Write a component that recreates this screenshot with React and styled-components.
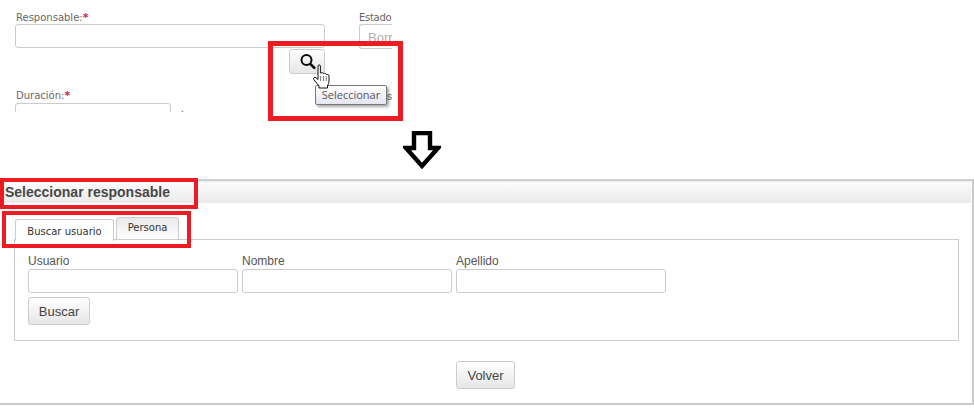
import React from "react";
import styled, { createGlobalStyle } from "styled-components";

const GlobalStyle = createGlobalStyle`
  html, body {
    margin: 0;
    padding: 0;
    background: #fff;
  }
  body {
    font-family: "Liberation Sans", Arial, sans-serif;
  }
`;

const Page = styled.div`
  position: relative;
  width: 974px;
  height: 410px;
  overflow: hidden;
  background: #fff;
`;

/* ---- top form snippet ---- */
const TopForm = styled.div`
  height: 112px;
  width: 392px;
  overflow: hidden;
  padding: 11px 0 0 15px;
  box-sizing: border-box;
  display: grid;
  grid-template-columns: 310px 33px;
  grid-template-rows: 78px auto;
  column-gap: 34px;
`;

const Field = styled.div`
  display: flex;
  flex-direction: column;
`;

const TopLabel = styled.label`
  font-family: "DejaVu Sans", Verdana, sans-serif;
  font-size: 10px;
  line-height: 13px;
  color: #666;
  padding-left: ${(p) => p.$indent || 0}px;
  letter-spacing: ${(p) => p.$tight || 0}px;
  white-space: nowrap;
  b {
    color: #d6135c;
    font-size: 11px;
    font-weight: 700;
    line-height: 10px;
  }
`;

const TopInput = styled.div`
  box-sizing: border-box;
  width: ${(p) => p.$w}px;
  height: ${(p) => p.$h}px;
  border: 1px solid #ccc;
  border-radius: 3px;
  background: #fff;
  flex: none;
`;

const ClippedInput = styled(TopInput)`
  border-right: none;
  border-radius: 3px 0 0 3px;
  padding: 5px 0 0 8px;
  overflow: hidden;
  font-size: 13px;
  line-height: 16px;
  color: #b0b0b0;
  white-space: nowrap;
`;

const SearchButton = styled.button`
  display: flex;
  align-items: center;
  justify-content: center;
  align-self: flex-end;
  box-sizing: border-box;
  width: 36px;
  height: 25px;
  margin-top: 1px;
  padding: 0;
  border: 1px solid #ccc;
  border-radius: 3px;
  background: linear-gradient(#fff, #e6e6e6);
`;

const DurationRow = styled.div`
  display: flex;
  align-items: flex-start;
  gap: 10px;
  margin-top: 1px;
`;

const Dot = styled.span`
  font-size: 10px;
  line-height: 8px;
  color: #555;
  margin-top: 2px;
`;

/* ---- overlays in the top snippet ---- */
const Tooltip = styled.div`
  position: absolute;
  left: 315px;
  top: 85px;
  width: 72px;
  height: 20px;
  box-sizing: border-box;
  border: 1px solid #767676;
  border-radius: 2px;
  background: linear-gradient(#fff, #e4e5f0);
  box-shadow: 2px 2px 3px rgba(0, 0, 0, 0.35);
  font-family: "Open Sans", sans-serif;
  font-size: 11px;
  line-height: 18px;
  text-align: center;
  color: #575757;
`;

const BehindText = styled.span`
  position: absolute;
  left: 387px;
  top: 91px;
  font-size: 10px;
  line-height: 12px;
  color: #666;
`;

const Cursor = styled.svg`
  position: absolute;
  left: 312px;
  top: 64px;
`;

const RedFrame = styled.div`
  position: absolute;
  left: ${(p) => p.$x}px;
  top: ${(p) => p.$y}px;
  width: ${(p) => p.$w}px;
  height: ${(p) => p.$h}px;
  box-sizing: border-box;
  border: ${(p) => p.$b || 4}px solid #ed1c24;
  pointer-events: none;
`;

const ArrowRow = styled.div`
  height: 67px;
  padding: 19px 0 0 403px;
  box-sizing: border-box;
`;

/* ---- dialog ---- */
const Dialog = styled.div`
  box-sizing: border-box;
  width: 974px;
  height: 226px;
  border-top: 2px solid #cfcfcf;
  border-right: 2px solid #c9c9c9;
  border-bottom: 2px solid #c9c9c9;
  display: flex;
  flex-direction: column;
`;

const DialogHeader = styled.div`
  height: 22px;
  margin-right: 1px;
  padding-left: 5px;
  border-top: 1px solid #ececec;
  box-sizing: border-box;
  background: linear-gradient(#fbfbfb, #ebeaea);
  font-size: 14px;
  font-weight: 700;
  line-height: 21px;
  color: #474747;
  flex: none;
`;

const TabBar = styled.div`
  display: flex;
  align-items: flex-end;
  gap: 2px;
  height: 37px;
  margin-bottom: -1px;
  padding-left: 15px;
  box-sizing: border-box;
  position: relative;
  flex: none;
`;

const Tab = styled.div`
  box-sizing: border-box;
  width: ${(p) => p.$w}px;
  height: ${(p) => (p.$active ? 22 : 23)}px;
  border: 1px solid #ccc;
  border-bottom: ${(p) => (p.$active ? "none" : "1px solid #ccc")};
  border-radius: 3px 3px 0 0;
  background: ${(p) => (p.$active ? "#fff" : "linear-gradient(#e9e9e9, #fff)")};
  font-family: "DejaVu Sans", Verdana, sans-serif;
  font-size: 10px;
  line-height: ${(p) => (p.$active ? 23 : 20)}px;
  text-align: center;
  color: #333;
  margin-bottom: ${(p) => (p.$active ? -1 : 0)}px;
  position: relative;
`;

const TabPanel = styled.div`
  box-sizing: border-box;
  width: 945px;
  height: 102px;
  margin-left: 14px;
  padding: 14px 13px 0;
  border: 1px solid #ccc;
  flex: none;
`;

const Columns = styled.div`
  display: flex;
  gap: 4px;
`;

const SearchField = styled.div`
  display: flex;
  flex-direction: column;
  width: 210px;
`;

const SearchLabel = styled.label`
  font-size: 12px;
  line-height: 15px;
  color: #555;
`;

const SearchInput = styled.div`
  box-sizing: border-box;
  height: 24px;
  border: 1px solid #ccc;
  border-radius: 3px;
  background: #fff;
`;

const ActionButton = styled.button`
  display: block;
  box-sizing: border-box;
  width: ${(p) => p.$w}px;
  height: 28px;
  margin: ${(p) => p.$m || 0};
  padding: 0;
  border: 1px solid #ccc;
  border-radius: 3px;
  background: linear-gradient(#fff, #e6e6e6);
  font-family: "Liberation Sans", Arial, sans-serif;
  font-size: 13px;
  color: #444;
`;

const SearchGlyph = () => (
  <svg width="17" height="17" viewBox="0 0 17 17" fill="none">
    <circle cx="7.5" cy="7" r="5" stroke="#0b0b0b" strokeWidth="2" />
    <path d="M11.3 10.8 L15.3 14.8" stroke="#0b0b0b" strokeWidth="2.6" strokeLinecap="round" />
  </svg>
);

const HandCursor = () => (
  <Cursor width="20" height="26" viewBox="0 0 20 26">
    <path
      d="M6 2 C6 .6 8.4 .6 8.4 2 L8.4 9 C9.6 8.3 11 8.5 11.4 9.6 C12.6 9 14 9.3 14.3 10.5 C15.6 10 17 10.6 17 12 L17 17 C17 19 16 20.5 15.5 22 L15.5 24 L7 24 L7 22 C5.5 20 3.5 17.5 1.8 15.5 C.8 14 2.6 12.6 4 13.8 L6 15.5 Z"
      fill="#fff"
      stroke="#111"
      strokeWidth="1"
      strokeLinejoin="round"
    />
    <path d="M8.6 12 V17 M11.4 12 V17 M14.2 12 V17" stroke="#777" strokeWidth="1" />
  </Cursor>
);

const DownArrow = () => (
  <svg width="38" height="39" viewBox="0 0 38 39" fill="none">
    <path
      d="M11 2 H27 V17 H35 L19 35 L3 17 H11 Z"
      fill="#fff"
      stroke="#000"
      strokeWidth="4.4"
      strokeLinejoin="miter"
    />
  </svg>
);

const searchFields = ["Usuario", "Nombre", "Apellido"];

const App = () => (
  <Page>
    <GlobalStyle />

    <TopForm>
      <Field>
        <TopLabel $indent={1}>
          Responsable:<b>*</b>
        </TopLabel>
        <TopInput $w={310} $h={24} />
        <SearchButton>
          <SearchGlyph />
        </SearchButton>
      </Field>
      <Field>
        <TopLabel $tight={-0.3}>Estado</TopLabel>
        <ClippedInput $w={33} $h={25}>
          Borrador
        </ClippedInput>
      </Field>
      <Field>
        <TopLabel $indent={1}>
          Duración:<b>*</b>
        </TopLabel>
        <DurationRow>
          <TopInput $w={156} $h={24} />
          <Dot>.</Dot>
        </DurationRow>
      </Field>
    </TopForm>

    <ArrowRow>
      <DownArrow />
    </ArrowRow>

    <Dialog>
      <DialogHeader>Seleccionar responsable</DialogHeader>
      <TabBar>
        <Tab $active $w={99}>
          Buscar usuario
        </Tab>
        <Tab $w={63}>Persona</Tab>
      </TabBar>
      <TabPanel>
        <Columns>
          {searchFields.map((name) => (
            <SearchField key={name}>
              <SearchLabel>{name}</SearchLabel>
              <SearchInput />
            </SearchField>
          ))}
        </Columns>
        <ActionButton $w={62} $m="4px 0 0">
          Buscar
        </ActionButton>
      </TabPanel>
      <ActionButton $w={59} $m="20px 0 0 456px">
        Volver
      </ActionButton>
    </Dialog>

    <BehindText>s</BehindText>
    <Tooltip>Seleccionar</Tooltip>
    <HandCursor />
    <RedFrame $x={268} $y={41} $w={135} $h={80} $b={5} />
    <RedFrame $x={0} $y={178} $w={198} $h={31} />
    <RedFrame $x={2} $y={211} $w={189} $h={37} />
  </Page>
);

export default App;
